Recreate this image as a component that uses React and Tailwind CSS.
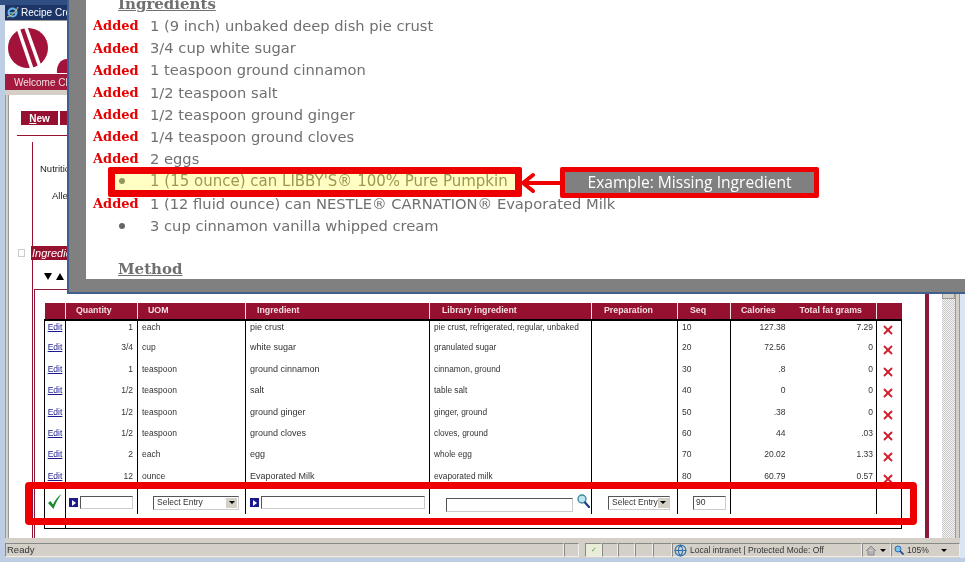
import { X, Globe } from 'lucide-react';

const ingredients = [
  { added: true, text: '1 (9 inch) unbaked deep dish pie crust' },
  { added: true, text: '3/4 cup white sugar' },
  { added: true, text: '1 teaspoon ground cinnamon' },
  { added: true, text: '1/2 teaspoon salt' },
  { added: true, text: '1/2 teaspoon ground ginger' },
  { added: true, text: '1/4 teaspoon ground cloves' },
  { added: true, text: '2 eggs' },
  { missing: true, text: "1 (15 ounce) can LIBBY'S® 100% Pure Pumpkin" },
  { added: true, text: '1 (12 fluid ounce) can NESTLE® CARNATION® Evaporated Milk' },
  { text: '3 cup cinnamon vanilla whipped cream' },
];

const rows = [
  ['1', 'each', 'pie crust', 'pie crust, refrigerated, regular, unbaked', '10', '127.38', '7.29'],
  ['3/4', 'cup', 'white sugar', 'granulated sugar', '20', '72.56', '0'],
  ['1', 'teaspoon', 'ground cinnamon', 'cinnamon, ground', '30', '.8', '0'],
  ['1/2', 'teaspoon', 'salt', 'table salt', '40', '0', '0'],
  ['1/2', 'teaspoon', 'ground ginger', 'ginger, ground', '50', '.38', '0'],
  ['1/2', 'teaspoon', 'ground cloves', 'cloves, ground', '60', '44', '.03'],
  ['2', 'each', 'egg', 'whole egg', '70', '20.02', '1.33'],
  ['12', 'ounce', 'Evaporated Milk', 'evaporated milk', '80', '60.79', '0.57'],
];

const headCell = 'border-r border-[#f3e4e8] font-bold text-left';
const sunken = 'border-y border-l border-r border-t-[#555] border-l-[#555] border-r-[#ccc] border-b-[#ccc] bg-white';
const statusCell = 'h-[14px] border border-t-[#888] border-l-[#888] border-r-[#eee] border-b-[#eee]';

const ArrowButton = () => (
  <span className="flex h-[9px] w-[9px] shrink-0 items-center justify-center bg-[#1a1a8c]">
    <span className="h-0 w-0 border-y-[3px] border-l-[4px] border-y-transparent border-l-white" />
  </span>
);

const SelectBox = ({ className }) => (
  <div className={`flex h-[14px] items-center justify-between whitespace-nowrap pl-[3px] pr-px text-[8.5px] ${sunken} ${className}`}>
    <span>Select Entry</span>
    <span className="flex h-[10px] w-[11px] shrink-0 items-center justify-center bg-[#d4d0c8]">
      <span className="h-0 w-0 border-x-[3px] border-t-[3px] border-x-transparent border-t-black" />
    </span>
  </div>
);

const Magnifier = () => (
  <svg width="13" height="14" viewBox="0 0 13 14" className="-mt-[4px] shrink-0">
    <circle cx="5" cy="5" r="4" fill="#bfe6ee" stroke="#3d8c9e" strokeWidth="1.4" />
    <path d="M8 8.5L12 13" stroke="#1f3f8a" strokeWidth="2.2" strokeLinecap="round" />
  </svg>
);

const Popup = () => (
  <div className="absolute left-[67px] top-0 h-[294px] w-[898px] border-b-2 border-l-2 border-[#3f5f8c] bg-[#808080] pb-[13px] pl-[17px]">
    <div className="h-full overflow-hidden bg-white pl-[7px] font-['DejaVu_Sans',sans-serif] text-[14.7px] text-[#707070]">
      <div className="-mt-[6px] ml-[25px] font-['DejaVu_Serif',serif] text-[15px] font-bold leading-[20px]">
        <span className="underline">Ingredients</span>
      </div>
      <div className="mt-[1px]">
        {ingredients.map((item) => (
          <div
            key={item.text}
            className={`flex h-[22.2px] items-center ${item.missing ? 'ml-[21px] w-[402px] bg-[#ffffc4] text-[15px] text-[#9a9a50]' : ''}`}
          >
            {item.added && (
              <span className="w-[57px] font-['DejaVu_Serif',serif] text-[13px] font-bold text-[#e60000]">Added</span>
            )}
            {!item.added && (
              <span className={`flex ${item.missing ? 'w-[36px] pl-[5px]' : 'w-[57px] pl-[26px]'}`}>
                <span className={`h-[6px] w-[6px] rounded-full ${item.missing ? 'bg-[#8f9a5c]' : 'bg-[#666]'}`} />
              </span>
            )}
            <span>{item.text}</span>
          </div>
        ))}
      </div>
      <div className="ml-[25px] mt-[22px] font-['DejaVu_Serif',serif] text-[15px] font-bold leading-[20px]">
        <span className="underline">Method</span>
      </div>
    </div>
  </div>
);

const Annotations = () => (
  <>
    <div className="absolute left-[108px] top-[167px] h-[30px] w-[414px] rounded-[2px] border-[7px] border-[#ee0000]" />
    <svg className="absolute left-[520px] top-[172px]" width="42" height="22" viewBox="0 0 42 22">
      <path d="M42 11H4M13 3L3 11L13 19" fill="none" stroke="#ee0000" strokeWidth="4" strokeLinecap="round" strokeLinejoin="round" />
    </svg>
    <div className="absolute left-[560px] top-[167px] flex h-[31px] w-[259px] items-center justify-center rounded-[2px] border-[5px] border-[#ee0000] bg-[#808080] font-['Open_Sans',sans-serif] text-[15.6px] text-white">
      Example: Missing Ingredient
    </div>
    <div className="absolute left-[25px] top-[482px] h-[43px] w-[892px] rounded-[4px] border-[7px] border-[#ee0000]" />
  </>
);

const LeftPanel = () => (
  <div className="h-[284px] w-[62px] shrink-0 overflow-hidden font-['Liberation_Sans',sans-serif] text-[#222]">
    <div className="flex h-[15px] items-center gap-[2px] bg-[#1c3566] pl-px text-[10px] text-white">
      <svg width="13" height="13" viewBox="0 0 13 13" className="shrink-0">
        <circle cx="6.5" cy="6.5" r="4" fill="none" stroke="#69b8ea" strokeWidth="2" />
        <path d="M2.5 7H10.5" stroke="#69b8ea" strokeWidth="1.4" />
        <path d="M1 11C4 11 10 6 12 1" fill="none" stroke="#e8c860" strokeWidth="1" />
      </svg>
      <span className="whitespace-nowrap">Recipe Creator</span>
    </div>
    <div className="h-[54px] border-t border-[#999]">
      <svg width="62" height="54" viewBox="0 0 62 54">
        <circle cx="23" cy="27" r="20" fill="#a3123a" />
        <path d="M12 4L27 48M20 4L35 46" stroke="#fff" strokeWidth="3.5" />
        <path d="M52 52A10 12 0 0 1 62 38V52Z" fill="#a3123a" />
      </svg>
    </div>
    <div className="flex h-[16px] items-center whitespace-nowrap bg-[#a31a3e] pl-[9px] text-[10px] text-[#f3dfe3]">
      Welcome Chef
    </div>
    <div className="h-[5px] bg-[#d4d0c8]" />
    <div className="flex">
      <div className="w-[4px] shrink-0 self-stretch border-x border-[#999] bg-[#d4d0c8]" />
      <div className="min-w-0 flex-1">
        <div className="flex pl-[12px] pt-[16px]">
          <div className="flex h-[14px] w-[37px] shrink-0 items-center justify-center bg-[#96102f] text-[10px] font-bold text-white">
            <span><span className="underline">N</span>ew</span>
          </div>
          <div className="ml-[2px] h-[14px] w-[20px] shrink-0 bg-[#96102f]" />
        </div>
        <div className="ml-[8px] mt-[10px] h-px bg-[#96102f]" />
        <div className="ml-[23px] mt-[6px] h-[104px] border-l border-[#96102f] text-[9.5px]">
          <div className="whitespace-nowrap pl-[7px] pt-[20px]">Nutrition</div>
          <div className="whitespace-nowrap pl-[19px] pt-[13px]">Allergens</div>
        </div>
        <div className="flex h-[14px] items-center pl-[9px]">
          <span className="mr-[6px] h-[8px] w-[7px] shrink-0 border border-[#ccc]" />
          <span className="flex-1 whitespace-nowrap bg-[#96102f] pl-[1px] text-[11px] italic leading-[14px] text-white">
            Ingredients
          </span>
        </div>
        <div className="ml-[23px] flex h-[29px] items-center gap-[4px] border-l border-[#96102f] pl-[11px] pt-[4px]">
          <span className="h-0 w-0 border-x-[4px] border-t-[7px] border-x-transparent border-t-black" />
          <span className="h-0 w-0 border-x-[4px] border-b-[7px] border-x-transparent border-b-black" />
        </div>
      </div>
    </div>
  </div>
);

const IngredientTable = () => (
  <table className="w-[857px] table-fixed border-collapse font-['Liberation_Sans',sans-serif] text-[8.5px] text-[#333]">
    <colgroup>
      <col className="w-[21px]" />
      <col className="w-[72px]" />
      <col className="w-[108px]" />
      <col className="w-[184px]" />
      <col className="w-[162px]" />
      <col className="w-[86px]" />
      <col className="w-[53px]" />
      <col className="w-[63px]" />
      <col className="w-[83px]" />
      <col className="w-[25px]" />
    </colgroup>
    <thead>
      <tr className="h-[17px] border-b-2 border-black bg-[#96102f] text-[8.8px] text-[#f3dfe3]">
        <th className={headCell} />
        <th className={`${headCell} pl-[10px]`}>Quantity</th>
        <th className={`${headCell} pl-[10px]`}>UOM</th>
        <th className={`${headCell} pl-[11px]`}>Ingredient</th>
        <th className={`${headCell} pl-[12px]`}>Library ingredient</th>
        <th className={`${headCell} pl-[12px]`}>Preparation</th>
        <th className={`${headCell} pl-[12px]`}>Seq</th>
        <th className="pl-[10px] text-left font-bold">Calories</th>
        <th className={`${headCell} pl-[6px]`}>Total fat grams</th>
        <th />
      </tr>
    </thead>
    <tbody>
      {rows.map((row) => (
        <tr key={row[4]} className="h-[21.4px] align-top leading-[13px]">
          <td className="border-x border-black text-center text-[#1a1a8c] underline">Edit</td>
          <td className="border-r border-black pr-[4px] text-right">{row[0]}</td>
          <td className="border-r border-black pl-[4px]">{row[1]}</td>
          <td className="border-r border-black pl-[4px] text-[9px]">{row[2]}</td>
          <td className="whitespace-nowrap border-r border-black pl-[4px] text-[8.3px]">{row[3]}</td>
          <td className="border-r border-black" />
          <td className="border-r border-black pl-[4px]">{row[4]}</td>
          <td className="pr-[8px] text-right">{row[5]}</td>
          <td className="border-r border-black pr-[3px] text-right">{row[6]}</td>
          <td className="border-r border-black pl-[4px] pt-[2px]">
            <X className="h-[14px] w-[14px] text-[#d02030]" strokeWidth={3.2} />
          </td>
        </tr>
      ))}
      <tr className="h-[23px]">
        <td className="border-x border-black pl-[3px]">
          <svg width="14" height="15" viewBox="0 0 14 15" className="-mt-[3px]">
            <path d="M0 9L2.5 7L5 10.5C7 6 10 2.5 13.5 0C10.5 4 7.5 9 5.5 15Z" fill="#1c8a2e" />
          </svg>
        </td>
        <td className="border-r border-black pl-[3px]">
          <div className="flex items-center gap-[2px]">
            <ArrowButton />
            <div className={`h-[13px] w-[53px] ${sunken}`} />
          </div>
        </td>
        <td className="border-r border-black pl-[15px]">
          <SelectBox className="w-[86px]" />
        </td>
        <td className="border-r border-black pl-[4px]">
          <div className="flex items-center gap-[2px]">
            <ArrowButton />
            <div className={`h-[13px] w-[164px] ${sunken}`} />
          </div>
        </td>
        <td className="border-r border-black pl-[16px]">
          <div className="flex items-center gap-[4px]">
            <div className={`mt-[4px] h-[14px] w-[127px] ${sunken}`} />
            <Magnifier />
          </div>
        </td>
        <td className="border-r border-black pl-[16px]">
          <SelectBox className="w-[62px]" />
        </td>
        <td className="border-r border-black pl-[15px]">
          <div className={`flex h-[14px] w-[33px] items-center pl-[2px] ${sunken}`}>90</div>
        </td>
        <td />
        <td className="border-r border-black" />
        <td className="border-r border-black" />
      </tr>
      <tr className="h-[14px] border-b border-black">
        <td className="border-x border-black" />
        <td colSpan={8} />
        <td className="border-r border-black" />
      </tr>
    </tbody>
  </table>
);

const TableSection = () => (
  <div className="flex h-[249px]">
    <div className="w-[4px] shrink-0 border-x border-[#999] bg-[#d4d0c8]" />
    <div className="ml-[23px] flex flex-1 border-l border-[#96102f] pl-px">
      <div className="flex-1 border-l border-r-4 border-t border-[#8a1c3a] pl-[9px] pt-[13px]">
        <IngredientTable />
      </div>
      <div className="w-[13px] shrink-0" />
      <div className="w-[13px] shrink-0 bg-[#e8e8e8] bg-[repeating-conic-gradient(#c8c8c8_0_25%,#f4f4f4_0_50%)] bg-size-[2px_2px]">
        <div className="h-[10px] border border-[#999] bg-[#d4d0c8]" />
      </div>
      <div className="w-[5px] shrink-0 border-x border-[#999] bg-[#d4d0c8]" />
    </div>
  </div>
);

const StatusBar = () => (
  <div className="flex h-[20px] items-start bg-[#d4d0c8] pt-[5px] font-['Liberation_Sans',sans-serif] text-[8.5px] text-[#333]">
    <div className={`flex w-[559px] items-center pl-px text-[9.5px] ${statusCell}`}>Ready</div>
    <div className={`w-[15px] ${statusCell}`} />
    <div className="w-[6px]" />
    <div className={`flex w-[17px] items-center justify-center bg-[#e8ecd8] text-[7px] text-[#6a9a5a] ${statusCell}`}>✓</div>
    <div className={`w-[16px] ${statusCell}`} />
    <div className={`w-[17px] ${statusCell}`} />
    <div className={`w-[18px] ${statusCell}`} />
    <div className={`w-[19px] ${statusCell}`} />
    <div className={`flex w-[190px] items-center gap-[3px] pl-px ${statusCell}`}>
      <Globe className="h-[13px] w-[13px] shrink-0 text-[#2a6fb0]" />
      <span className="whitespace-nowrap">Local intranet | Protected Mode: Off</span>
    </div>
    <div className={`flex w-[29px] items-center gap-[3px] pl-[2px] ${statusCell}`}>
      <svg width="12" height="11" viewBox="0 0 12 11" className="shrink-0">
        <path d="M1 6L6 1L11 6M3 5V10H9V5" fill="#b5b5b5" stroke="#8a8a8a" />
      </svg>
      <span className="h-0 w-0 border-x-[3px] border-t-[3px] border-x-transparent border-t-black" />
    </div>
    <div className={`flex flex-1 items-center pl-[2px] ${statusCell}`}>
      <svg width="10" height="10" viewBox="0 0 10 10" className="mr-[3px] shrink-0">
        <circle cx="4" cy="4" r="3" fill="#7fc0e8" stroke="#2a6fb0" />
        <path d="M6 6L9.5 9.5" stroke="#1f3f8a" strokeWidth="1.6" />
      </svg>
      <span>105%</span>
      <span className="ml-[12px] h-0 w-0 border-x-[3px] border-t-[3px] border-x-transparent border-t-black" />
    </div>
  </div>
);

export default function App() {
  return (
    <div className="relative flex h-[562px] w-[965px] flex-col overflow-hidden bg-white blur-[0.35px]">
      <div className="h-[5px] shrink-0 bg-[#2f4f82]" />
      <div className="flex h-[553px] shrink-0">
        <div className="w-[5px] shrink-0 bg-[#bccde4]" />
        <div className="min-w-0 flex-1">
          <LeftPanel />
          <TableSection />
          <StatusBar />
        </div>
        <div className="w-[5px] shrink-0 bg-[#dce6f2]" />
      </div>
      <div className="h-[4px] shrink-0 bg-[#bccde4]" />
      <Popup />
      <Annotations />
    </div>
  );
}
